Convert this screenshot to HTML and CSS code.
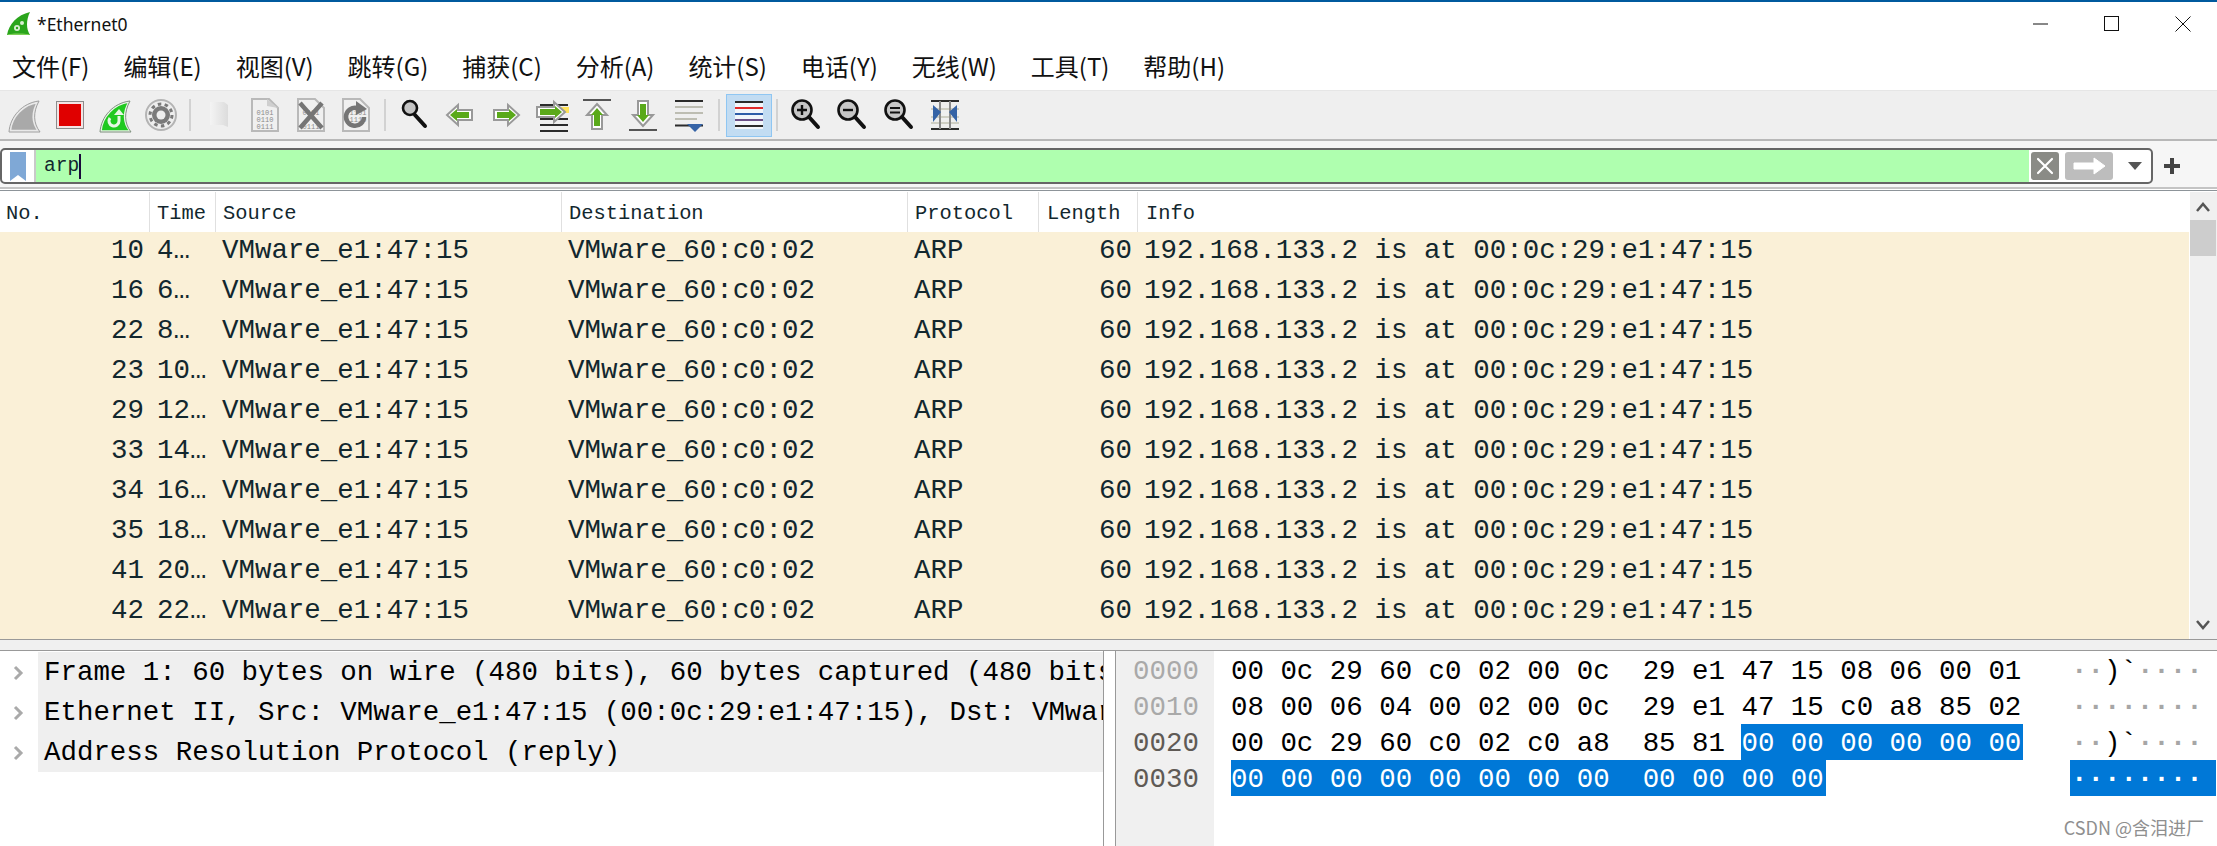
FILE: index.html
```html
<!DOCTYPE html>
<html lang="zh">
<head>
<meta charset="utf-8">
<title>*Ethernet0</title>
<link rel="stylesheet" href="styles.css">
</head>
<body>
<div class="window">
  <header class="titlebar">
    <svg class="appicon" width="24" height="24" viewBox="0 0 24 24"><path d="M0 23C2 12 10 3 23 0C19 8 19 17 23 23Z" fill="#2aa51c"/><path d="M0 23C1 21 22 21 23 23Z" fill="#7ccf55"/><circle cx="10" cy="16" r="3" fill="#d9efd2"/><circle cx="10" cy="16" r="1.2" fill="#2aa51c"/><circle cx="15" cy="11" r="2" fill="#d9efd2"/></svg>
    <span class="wintitle">*Ethernet0</span>
    <div class="winbtns">
      <svg width="16" height="16" viewBox="0 0 16 16"><path d="M0 8H15" stroke="#111" fill="none"/></svg>
      <svg width="16" height="16" viewBox="0 0 16 16"><rect x=".5" y=".5" width="14" height="14" stroke="#111" fill="none"/></svg>
      <svg width="16" height="16" viewBox="0 0 16 16"><path d="M.5 .5L15.5 15.5M15.5 .5L.5 15.5" stroke="#111" fill="none"/></svg>
    </div>
  </header>
  <nav class="menubar">
    <span>文件(F)</span><span>编辑(E)</span><span>视图(V)</span><span>跳转(G)</span><span>捕获(C)</span><span>分析(A)</span><span>统计(S)</span><span>电话(Y)</span><span>无线(W)</span><span>工具(T)</span><span>帮助(H)</span>
  </nav>
  <div class="toolbar">
    <div class="tool"><svg viewBox="0 0 36 36"><path d="M4 34C5 20 17 7 32 5C26 15 26 26 33 34Z" fill="#a9a9a9" stroke="#e9e9e9" stroke-width="2.4"/><path d="M3 35C4 20 16 6 33 4C27 15 27 26 34 35Z" fill="none" stroke="#a0a0a0"/></svg></div>
    <div class="tool"><svg viewBox="0 0 36 36"><rect x="4.5" y="4.500" width="27" height="27" fill="#f3e4e4" stroke="#8c8c8c"/><rect x="7" y="7" width="22" height="22" fill="#e00000"/></svg></div>
    <div class="tool"><svg viewBox="0 0 36 36"><path d="M4 34C5 20 17 7 32 5C26 15 26 26 33 34Z" fill="#1fc91f" stroke="#e9f5e6" stroke-width="1.6"/><path d="M3 35C4 20 16 6 33 4C27 15 27 26 34 35Z" fill="none" stroke="#7f8f7f"/><path d="M22 19V24A5 5 0 1 1 13 21" fill="none" stroke="#e7f7e4" stroke-width="3"/><path d="M17 18L22 12L27 18Z" fill="#e7f7e4"/></svg></div>
    <div class="tool"><svg viewBox="0 0 36 36"><circle cx="18" cy="18" r="15" fill="#eee" stroke="#b4b4b4" stroke-width="2"/><circle cx="18" cy="18" r="9" fill="#7a7a7a"/><circle cx="18" cy="18" r="4.500" fill="#eee"/><circle cx="18" cy="18" r="11" fill="none" stroke="#7a7a7a" stroke-width="3" stroke-dasharray="3.500 3.400"/></svg></div>
    <i class="sep"></i>
    <div class="tool"><svg viewBox="0 0 36 36"><defs><linearGradient id="pale" x1="0" x2="1"><stop offset="0" stop-color="#f4f4f4"/><stop offset="1" stop-color="#dcdcdc"/></linearGradient></defs><path d="M9 5H23L27 8V30L22 28H9Z" fill="url(#pale)"/></svg></div>
    <div class="tool"><svg viewBox="0 0 36 36"><path d="M5 2H22L31 11V34H5Z" fill="#f0f0f0" stroke="#b9b9b9" stroke-width="2"/><path d="M20 2V9L31 11Z" fill="#cfcfcf"/><text class="bits" x="18" y="18">0101</text><text class="bits" x="18" y="25">0110</text><text class="bits" x="18" y="32">0111</text></svg></div>
    <div class="tool"><svg viewBox="0 0 36 36"><path d="M5 2H22L31 11V34H5Z" fill="#f0f0f0" stroke="#b9b9b9" stroke-width="2"/><text class="bits" x="18" y="18">0101</text><text class="bits" x="18" y="32">0111</text><path d="M7 6L29 31M29 6L7 31" stroke="#757575" stroke-width="4.500"/></svg></div>
    <div class="tool"><svg viewBox="0 0 36 36"><path d="M5 2H22L31 11V34H5Z" fill="#f0f0f0" stroke="#b9b9b9" stroke-width="2"/><text class="bits" x="20" y="18">1101</text><text class="bits" x="20" y="25">1110</text><path d="M26 20A9 9 0 1 1 19 11" fill="none" stroke="#757575" stroke-width="4.500"/><path d="M18 4L29 12L18 18Z" fill="#757575"/></svg></div>
    <i class="sep"></i>
    <div class="tool"><svg viewBox="0 0 36 36"><circle cx="14" cy="11" r="7" fill="#c4c4c4" stroke="#111" stroke-width="2.600"/><path d="M19 18L29 29" stroke="#111" stroke-width="4" stroke-linecap="round"/></svg></div>
    <div class="tool"><svg viewBox="0 0 36 36"><path d="M16 8L5 18L16 28V23H30V13H16Z" fill="#fff" stroke="#999" stroke-width="2"/><path d="M15 12L8 18L15 24V21H27V15H15Z" fill="#5aa91a"/></svg></div>
    <div class="tool"><svg viewBox="0 0 36 36"><path d="M20 8L31 18L20 28V23H6V13H20Z" fill="#fff" stroke="#999" stroke-width="2"/><path d="M21 12L28 18L21 24V21H9V15H21Z" fill="#5aa91a"/></svg></div>
    <div class="tool"><svg viewBox="0 0 36 36"><rect x="22" y="10" width="13" height="6" fill="#ffe25a"/><path d="M6 8H34M6 22H34M6 28H34M6 34H34" stroke="#2b2b2b" stroke-width="2"/><path d="M20 5L31 15L20 25V20H3V10H20Z" fill="#fff" stroke="#999" stroke-width="2"/><path d="M21 9L28 15L21 21V18H6V12H21Z" fill="#5aa91a"/></svg></div>
    <div class="tool"><svg viewBox="0 0 36 36"><path d="M4 3H32" stroke="#555" stroke-width="2"/><path d="M18 7L28 18H23V32H13V18H8Z" fill="#fff" stroke="#999" stroke-width="2"/><path d="M18 11L24 18H21V29H15V18H12Z" fill="#5aa91a"/></svg></div>
    <div class="tool"><svg viewBox="0 0 36 36"><path d="M4 33H32" stroke="#555" stroke-width="2"/><path d="M18 29L8 18H13V4H23V18H28Z" fill="#fff" stroke="#999" stroke-width="2"/><path d="M18 25L12 18H15V7H21V18H24Z" fill="#5aa91a"/></svg></div>
    <div class="tool"><svg viewBox="0 0 36 36"><path d="M4 4H32M4 28.500H32" stroke="#2b2b2b" stroke-width="2"/><path d="M4 10H32M4 16H32M4 22H26" stroke="#bdbdb2" stroke-width="2"/><path d="M16 27H32L24 35Z" fill="#3563a6"/></svg></div>
    <i class="sep sep-before-active"></i>
    <div class="tool active"><svg viewBox="0 0 36 36"><rect x="4" y="4" width="28" height="28" fill="#f2f6fa"/><path d="M4 5H32M4 29H32" stroke="#2b2b2b" stroke-width="2"/><path d="M4 11H32" stroke="#e02b2b" stroke-width="2"/><path d="M4 17H32" stroke="#2f5da8" stroke-width="2"/><path d="M4 23H32" stroke="#6a4f86" stroke-width="2"/></svg></div>
    <i class="sep sep-after-active"></i>
    <div class="tool zoomtool"><svg viewBox="0 0 36 36"><circle cx="14" cy="13" r="9.500" fill="#c6c6c6" stroke="#111" stroke-width="2.600"/><path d="M9 13H19M14 8V18" stroke="#111" stroke-width="2.400"/><path d="M21 20L30 30" stroke="#111" stroke-width="4" stroke-linecap="round"/></svg></div>
    <div class="tool zoomtool"><svg viewBox="0 0 36 36"><circle cx="14" cy="13" r="9.500" fill="#c6c6c6" stroke="#111" stroke-width="2.600"/><path d="M9 13H19" stroke="#111" stroke-width="2.400"/><path d="M21 20L30 30" stroke="#111" stroke-width="4" stroke-linecap="round"/></svg></div>
    <div class="tool zoomtool"><svg viewBox="0 0 36 36"><circle cx="14" cy="13" r="9.500" fill="#c6c6c6" stroke="#111" stroke-width="2.600"/><path d="M9 11H19M9 15.500H19" stroke="#111" stroke-width="2.200"/><path d="M21 20L30 30" stroke="#111" stroke-width="4" stroke-linecap="round"/></svg></div>
    <div class="tool zoomtool"><svg viewBox="0 0 36 36"><path d="M4 4H32M4 32H32" stroke="#2b2b2b" stroke-width="2"/><path d="M4 12H32M4 20H32M4 26H32" stroke="#cfcfc4" stroke-width="2"/><path d="M13 4V32M23 4V32" stroke="#8a8a8a" stroke-width="2"/><path d="M6 8L14 15L6 25Z M30 8L22 15L30 25Z" fill="#3563a6"/></svg></div>
  </div>
  <div class="filterbar">
    <div class="filter">
      <div class="bookmark"><svg width="16" height="29" viewBox="0 0 16 29"><path d="M0 0H16V29L8 23L0 29Z" fill="#7fa8d6"/></svg></div>
      <div class="filter-input"><span class="arp">arp</span><i class="caret"></i></div>
      <div class="clearbtn"><svg width="28" height="28" viewBox="0 0 28 28"><path d="M7 7L21 21M21 7L7 21" stroke="#fff" stroke-width="2.200" stroke-linecap="round"/></svg></div>
      <div class="applybtn"><svg width="48" height="28" viewBox="0 0 48 28"><path d="M9 11H29V6L40 14L29 22V17H9Z" fill="#fff" stroke="#fff" stroke-linejoin="round"/></svg></div>
      <svg class="drop" width="14" height="8" viewBox="0 0 14 8"><path d="M0 0H14L7 8Z" fill="#555"/></svg>
    </div>
    <svg class="plus" width="16" height="16" viewBox="0 0 16 16"><path d="M8 0V16M0 8H16" stroke="#444" stroke-width="4"/></svg>
  </div>
  <div class="rule"></div>
  <section class="packets">
    <div class="packet-main">
      <div class="cols head"><div>No.</div><div>Time</div><div>Source</div><div>Destination</div><div>Protocol</div><div>Length</div><div>Info</div></div>
      <div class="rows">
        <div class="cols row"><div class="num">10</div><div class="time">4…</div><div>VMware_e1:47:15</div><div>VMware_60:c0:02</div><div>ARP</div><div class="num">60</div><div>192.168.133.2 is at 00:0c:29:e1:47:15</div></div>
        <div class="cols row"><div class="num">16</div><div class="time">6…</div><div>VMware_e1:47:15</div><div>VMware_60:c0:02</div><div>ARP</div><div class="num">60</div><div>192.168.133.2 is at 00:0c:29:e1:47:15</div></div>
        <div class="cols row"><div class="num">22</div><div class="time">8…</div><div>VMware_e1:47:15</div><div>VMware_60:c0:02</div><div>ARP</div><div class="num">60</div><div>192.168.133.2 is at 00:0c:29:e1:47:15</div></div>
        <div class="cols row"><div class="num">23</div><div class="time">10…</div><div>VMware_e1:47:15</div><div>VMware_60:c0:02</div><div>ARP</div><div class="num">60</div><div>192.168.133.2 is at 00:0c:29:e1:47:15</div></div>
        <div class="cols row"><div class="num">29</div><div class="time">12…</div><div>VMware_e1:47:15</div><div>VMware_60:c0:02</div><div>ARP</div><div class="num">60</div><div>192.168.133.2 is at 00:0c:29:e1:47:15</div></div>
        <div class="cols row"><div class="num">33</div><div class="time">14…</div><div>VMware_e1:47:15</div><div>VMware_60:c0:02</div><div>ARP</div><div class="num">60</div><div>192.168.133.2 is at 00:0c:29:e1:47:15</div></div>
        <div class="cols row"><div class="num">34</div><div class="time">16…</div><div>VMware_e1:47:15</div><div>VMware_60:c0:02</div><div>ARP</div><div class="num">60</div><div>192.168.133.2 is at 00:0c:29:e1:47:15</div></div>
        <div class="cols row"><div class="num">35</div><div class="time">18…</div><div>VMware_e1:47:15</div><div>VMware_60:c0:02</div><div>ARP</div><div class="num">60</div><div>192.168.133.2 is at 00:0c:29:e1:47:15</div></div>
        <div class="cols row"><div class="num">41</div><div class="time">20…</div><div>VMware_e1:47:15</div><div>VMware_60:c0:02</div><div>ARP</div><div class="num">60</div><div>192.168.133.2 is at 00:0c:29:e1:47:15</div></div>
        <div class="cols row"><div class="num">42</div><div class="time">22…</div><div>VMware_e1:47:15</div><div>VMware_60:c0:02</div><div>ARP</div><div class="num">60</div><div>192.168.133.2 is at 00:0c:29:e1:47:15</div></div>
      </div>
    </div>
    <div class="scrollbar">
      <svg width="26" height="28" viewBox="0 0 26 28"><path d="M7 19L13 12L19 19" fill="none" stroke="#555" stroke-width="2.500"/></svg>
      <div class="thumb"></div>
      <div class="track"></div>
      <svg width="26" height="28" viewBox="0 0 26 28"><path d="M7 10L13 17L19 10" fill="none" stroke="#555" stroke-width="2.500"/></svg>
    </div>
  </section>
  <div class="splitter"></div>
  <section class="lower">
    <div class="details">
      <div class="tree"><svg width="38" height="40" viewBox="0 0 38 40"><path d="M15 15L21 21L15 27" fill="none" stroke="#aaa" stroke-width="3"/></svg><div class="tree-text">Frame 1: 60 bytes on wire (480 bits), 60 bytes captured (480 bits</div></div>
      <div class="tree"><svg width="38" height="40" viewBox="0 0 38 40"><path d="M15 15L21 21L15 27" fill="none" stroke="#aaa" stroke-width="3"/></svg><div class="tree-text">Ethernet II, Src: VMware_e1:47:15 (00:0c:29:e1:47:15), Dst: VMwar</div></div>
      <div class="tree"><svg width="38" height="40" viewBox="0 0 38 40"><path d="M15 15L21 21L15 27" fill="none" stroke="#aaa" stroke-width="3"/></svg><div class="tree-text">Address Resolution Protocol (reply)</div></div>
    </div>
    <div class="bytes">
      <div class="offsets">
        <div class="line dim">0000</div>
        <div class="line dim">0010</div>
        <div class="line">0020</div>
        <div class="line">0030</div>
      </div>
      <div class="hex">
        <div class="line">00 0c 29 60 c0 02 00 0c  29 e1 47 15 08 06 00 01</div>
        <div class="line">08 00 06 04 00 02 00 0c  29 e1 47 15 c0 a8 85 02</div>
        <div class="line">00 0c 29 60 c0 02 c0 a8  85 81 <span class="sel">00 00 00 00 00 00</span></div>
        <div class="line"><span class="sel">00 00 00 00 00 00 00 00  00 00 00 00</span></div>
      </div>
      <div class="ascii">
        <div class="line"><b>··</b>)`<b>····</b></div>
        <div class="line"><b>········</b></div>
        <div class="line"><b>··</b>)`<b>····</b></div>
        <div class="line selrow"><b>········</b></div>
      </div>
    </div>
  </section>
  <div class="watermark">CSDN @含泪进厂</div>
</div>
</body>
</html>
```
FILE: styles.css
```css
* { box-sizing: border-box; }
html, body { margin: 0; height: 846px; overflow: hidden; background: #fff; }
body { font-family: "Liberation Mono", monospace; color: #000; }
svg { display: block; flex: none; }

.window { position: relative; display: flex; flex-direction: column; width: 2217px; height: 846px; border-top: 2px solid #005a9e; }

.titlebar { display: flex; align-items: center; height: 43px; padding-left: 7px; flex: none; background: #fff; }
.wintitle { margin-left: 6px; font: 17.500px "Noto Sans", sans-serif; color: #111; }
.winbtns { margin-left: auto; display: flex; gap: 55px; padding-right: 26px; }

.menubar { display: flex; align-items: center; gap: 33.900px; height: 45px; padding: 0 0 4px 12px; flex: none; font: 24px "Noto Sans CJK SC", sans-serif; color: #111; }

.toolbar { display: flex; align-items: center; height: 51px; padding-left: 1px; flex: none; background: #efefef; border-top: 1px solid #e6e6e6; border-bottom: 2px solid #b8b8b8; }
.tool { display: flex; align-items: center; justify-content: center; width: 45.800px; height: 43px; flex: none; }
.tool svg { width: 36px; height: 36px; }
.active { width: 46px; background: #c2dcf2; border: 1px solid #8fc6f2; }
.zoomtool { width: 46.300px; }
.sep { width: 2px; height: 32px; margin: 0 5px; background: #d2d2d2; flex: none; }
.sep-before-active { margin: 0 6px; }
.sep-after-active { margin: 0 5px 0 4px; }
.bits { font: 7px "Liberation Mono", monospace; fill: #8b8b8b; text-anchor: middle; }

.filterbar { display: flex; align-items: center; height: 46px; padding-top: 4px; flex: none; background: #f6f6f6; }
.filter { display: flex; align-items: center; width: 2153px; height: 36px; background: #fff; border: 2px solid #666; border-radius: 5px; overflow: hidden; flex: none; }
.bookmark { display: flex; justify-content: center; width: 34px; height: 32px; padding-top: 2px; border-right: 2px solid #c9c9c9; flex: none; }
.filter-input { display: flex; align-items: center; flex: 1; height: 32px; padding-left: 8px; background: #afffaf; }
.arp { font-size: 19.500px; color: #12272e; }
.caret { width: 2px; height: 25px; background: #1a0a3a; }
.clearbtn { width: 28px; height: 28px; margin-left: 2px; background: #8a8b86; border-radius: 3px; flex: none; }
.applybtn { width: 48px; height: 28px; margin-left: 6px; background: #bdbdbd; border-radius: 3px; flex: none; }
.drop { margin: 0 9px 0 15px; }
.plus { margin-left: 11px; }

.rule { height: 5px; flex: none; background: #fff; border-top: 2px solid #c4c4c4; border-bottom: 1px solid #fff; box-shadow: inset 0 -1px 0 #8d9499; }

.packets { display: flex; height: 448px; flex: none; border-bottom: 1px solid #999; }
.packet-main { display: flex; flex-direction: column; width: 2189px; flex: none; }
.cols { display: grid; grid-template-columns: 150px 66px 346px 346px 131px 99px 1fr; flex: none; }
.cols > div { padding-left: 6px; white-space: nowrap; }
.head { height: 40px; font-size: 20.400px; color: #12272e; }
.head > div { padding-top: 4px; padding-left: 7px; line-height: 36px; border-right: 1px solid #e0e0e0; }
.head > div:first-child { padding-left: 6px; }
.head > div:nth-child(6) { padding-left: 8px; }
.head > div:last-child { padding-left: 8px; border-right: 0; }
.rows { flex: 1; background: #faf0d7; }
.row { height: 40px; font-size: 27.450px; line-height: 38px; color: #12272e; }
.row > .num { padding: 0 6px 0 0; text-align: right; }
.row > .time { padding-left: 7px; }

.scrollbar { display: flex; flex-direction: column; width: 27px; margin-left: 1px; padding-right: 1px; background: #f0f0f0; flex: none; }
.thumb { height: 36px; background: #cdcdcd; flex: none; }
.track { flex: 1; }

.splitter { height: 10px; flex: none; background: #f0f0f0; }

.lower { display: flex; flex: 1; min-height: 0; border-top: 1px solid #999; }
.details { width: 1104px; padding-top: 1px; border-right: 1px solid #999; flex: none; }
.tree { display: flex; height: 40px; }
.tree-text { width: 1065px; padding-left: 6px; font-size: 27.450px; line-height: 42px; white-space: nowrap; overflow: hidden; background: #efefef; }
.bytes { display: flex; flex: 1; min-width: 0; margin-left: 11px; border-left: 1px solid #999; font-size: 27.450px; }
.offsets { width: 98px; padding: 1px 0 0 17px; color: #5f5a55; background: #f0f0f0; flex: none; }
.line { height: 36px; line-height: 39px; white-space: pre; }
.dim { color: #a9a9a9; }
.hex { width: 856px; padding: 1px 0 0 17px; flex: none; }
.sel { display: inline-block; height: 36px; padding-right: 2px; background: #0078d7; color: #fff; }
.ascii { width: 146px; padding-top: 1px; flex: none; }
.ascii b { font-weight: bold; color: #a6a6a6; }
.ascii .line { padding-left: 1px; }
.selrow { background: #0078d7; }
.ascii .selrow b { color: #fff; }

.watermark { position: absolute; right: 13px; bottom: 6px; font: 18px "Noto Sans CJK SC", sans-serif; color: #8f8f8f; }
```
